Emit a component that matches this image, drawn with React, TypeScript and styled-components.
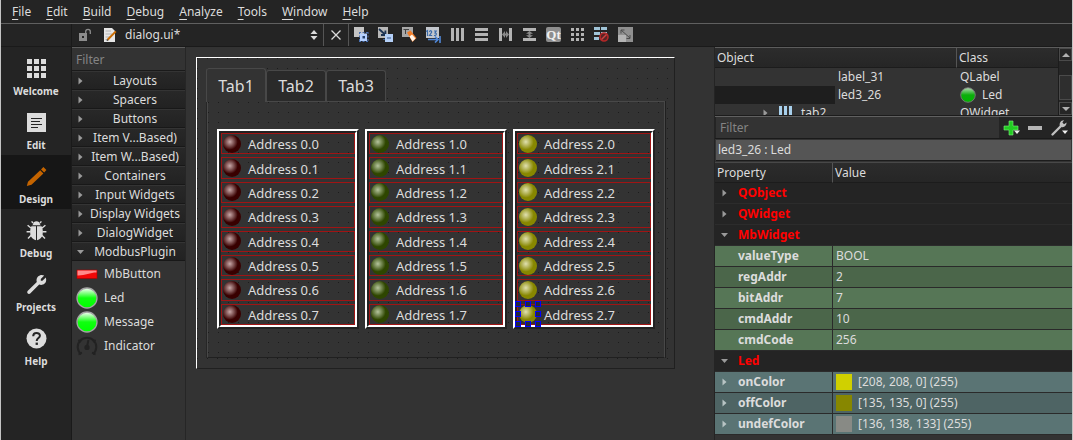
import React from "react";
import styled, { createGlobalStyle, css } from "styled-components";

const GlobalStyle = createGlobalStyle`
  *, *::before, *::after { box-sizing: border-box; }
  body {
    margin: 0;
    background: #333333;
    color: #dcdcdc;
    font: 12px/18px "Noto Sans", "Open Sans", sans-serif;
  }
  button, input, select {
    font: inherit;
    color: inherit;
    margin: 0;
    padding: 0;
    border: 0;
    border-radius: 0;
    background: none;
    outline: none;
  }
  svg { display: block; flex: none; }
`;

const dotGrid = css`
  background: #333333 radial-gradient(circle at 0 0, #1c1c1c 1px, transparent 1px) 0 0 / 10px 10px;
`;

const Window = styled.div`
  display: flex;
  flex-direction: column;
  min-height: 100vh;
  border-left: 1px solid #c4c4c4;
  border-right: 1px solid #c4c4c4;
`;

const MenuBar = styled.nav`
  display: flex;
  gap: 15px;
  height: 24px;
  padding: 3px 11px 0;
  background: #242424;
  border-bottom: 1px solid #606060;
`;

const MenuButton = styled.button`
  height: 18px;
  line-height: 18px;
  &::first-letter {
    text-decoration: underline;
    text-underline-offset: 3px;
  }
`;

const Toolbar = styled.header`
  display: flex;
  align-items: center;
  height: 23px;
  background: #242424;
  border-bottom: 1px solid #1a1a1a;
`;

const ToolbarStart = styled.div`
  width: 71px;
  align-self: stretch;
  border-right: 1px solid #1a1a1a;
`;

const FileArea = styled.div`
  display: flex;
  align-items: center;
  align-self: stretch;
  width: 252px;
  padding: 0 5px 0 6px;
  border-right: 1px solid #555555;
`;

const FileSelect = styled.select`
  appearance: none;
  flex: 1;
  height: 20px;
  margin-left: 8px;
  padding: 0;
`;

const IconButton = styled.button`
  display: flex;
  align-items: center;
  justify-content: center;
  width: 24px;
  height: 22px;
`;

const CloseArea = styled.div`
  display: flex;
  border-right: 1px solid #555555;
`;

const Body = styled.div`
  display: flex;
  flex: 1;
`;

const ModeBar = styled.nav`
  display: flex;
  flex-direction: column;
  width: 71px;
  background: #242424;
  border-right: 1px solid #1a1a1a;
`;

const ModeButton = styled.button<{ $active?: boolean }>`
  display: flex;
  flex-direction: column;
  align-items: center;
  height: 54px;
  padding-top: 11px;
  gap: 3px;
  font-size: 10px;
  font-weight: bold;
  line-height: 18px;
  background: ${(p) => (p.$active ? "#161616" : "transparent")};
`;

const Palette = styled.aside`
  display: flex;
  flex-direction: column;
  width: 114px;
  border-right: 1px solid #262626;
`;

const PaletteFilter = styled.input`
  width: 100%;
  height: 24px;
  padding: 1px 4px 0;
  border-top: 1px solid #5c5c5c;
  border-bottom: 1px solid #1a1a1a;
  background: #333333;
  &::placeholder { color: #848484; opacity: 1; }
`;

const GroupButton = styled.button`
  display: flex;
  align-items: center;
  width: 100%;
  height: 19px;
  padding: 0 0 0 5px;
  background: linear-gradient(#282828, #222222);
  border-top: 1px solid #343434;
  border-bottom: 1px solid #181818;
  white-space: nowrap;
`;

const GroupLabel = styled.span`
  flex: 1;
  padding-left: 1px;
  text-align: center;
  line-height: 17px;
`;

const PaletteItems = styled.ul`
  margin: 0;
  padding: 1px 4px 0;
  list-style: none;
`;

const PaletteItem = styled.li`
  display: flex;
  align-items: center;
  gap: 6px;
  height: 24px;
`;

const Canvas = styled.main`
  flex: 1;
  padding: 10px 0 0 10px;
  border-right: 1px solid #242424;
`;

const Form = styled.div`
  width: max-content;
  padding: 10px 9px;
  border: 1px solid;
  border-color: #ffffff #202020 #202020 #ffffff;
  ${dotGrid}
`;

const TabRow = styled.div`
  display: flex;
  align-items: flex-end;
  height: 33px;
`;

const TabButton = styled.button<{ $active?: boolean }>`
  position: relative;
  z-index: ${(p) => (p.$active ? 1 : 0)};
  width: 60px;
  height: ${(p) => (p.$active ? 34 : 31)}px;
  margin-bottom: ${(p) => (p.$active ? -1 : 0)}px;
  font-size: 16px;
  line-height: 24px;
  border: 1px solid #484848;
  border-bottom: 0;
  border-radius: 3px 3px 0 0;
  background: ${(p) => (p.$active ? "#333333" : "#2a2a2a")};
`;

const TabPane = styled.div`
  display: flex;
  gap: 6px;
  margin-left: 1px;
  padding: 27px 9px 28px;
  border: 1px solid;
  border-color: #484848 #484848 #202020 #484848;
  box-shadow: 1px 0 #202020, -1px 0 #262626;
  ${dotGrid}
`;

const Frame = styled.div`
  width: 142px;
  border: 2px solid;
  border-color: #ffffff #222222 #222222 #ffffff;
`;

const AddressList = styled.ul`
  display: flex;
  flex-direction: column;
  gap: 3px;
  min-height: 196px;
  margin: 0;
  padding: 0;
  list-style: none;
  border: 2px solid;
  border-color: #222222 #ffffff #ffffff #222222;
`;

const AddressRow = styled.li`
  display: flex;
  flex: 1;
  align-items: center;
  gap: 7px;
  padding-left: 1px;
  border: 1px solid #a01414;
`;

const AddressLabel = styled.span`
  padding-top: 1px;
  font-size: 13px;
  line-height: 18px;
`;

const LedBall = styled.span<{ $color: string; $shine: string }>`
  position: relative;
  width: 18px;
  height: 18px;
  border-radius: 50%;
  background: radial-gradient(circle at 38% 38%, ${(p) => p.$shine} 0, ${(p) => p.$color} 50%);
`;

const Handles = styled.span`
  position: absolute;
  inset: -4px;
  display: grid;
  grid-template-columns: repeat(3, 6px);
  grid-template-rows: repeat(3, 6px);
  justify-content: space-between;
  align-content: space-between;
`;

const Handle = styled.span<{ $hidden?: boolean }>`
  border: 1px solid #0000ff;
  background: #262640;
  visibility: ${(p) => (p.$hidden ? "hidden" : "visible")};
`;

const Inspector = styled.aside`
  width: 357px;
  display: flex;
  flex-direction: column;
`;

const ObjectArea = styled.div`
  display: flex;
  height: 69px;
  border-top: 1px solid #5c5c5c;
  border-bottom: 1px solid #1c1c1c;
`;

const TreeClip = styled.div`
  flex: 1;
  height: 67px;
  overflow: hidden;
`;

const Table = styled.table`
  width: 100%;
  table-layout: fixed;
  border-collapse: separate;
  border-spacing: 0;
`;

const HeadCell = styled.th<{ $last?: boolean }>`
  height: 20px;
  padding: 0 2px;
  font-weight: normal;
  text-align: left;
  line-height: 18px;
  background: linear-gradient(#2c2c2c, #262626);
  border-right: ${(p) => (p.$last ? "0" : "1px solid #555555")};
  border-bottom: 1px solid #1c1c1c;
`;

const TreeCell = styled.td<{ $indent?: number; $dark?: boolean }>`
  height: 18px;
  padding: 0 0 0 ${(p) => p.$indent ?? 3}px;
  line-height: 18px;
  ${(p) => p.$dark && "background: linear-gradient(90deg, #1e1e1e 120px, transparent 120px);"}
`;

const CellContent = styled.span<{ $gap?: number }>`
  display: flex;
  align-items: center;
  gap: ${(p) => p.$gap ?? 6}px;
  height: 18px;
`;

const ScrollBar = styled.div`
  display: flex;
  flex-direction: column;
  width: 14px;
  border-left: 1px solid #1c1c1c;
  background: #262626;
`;

const ScrollButton = styled.button`
  display: flex;
  align-items: center;
  justify-content: center;
  height: 13px;
  border: 1px solid #4a4a4a;
`;

const ScrollTrack = styled.div`
  flex: 1;
  padding: 14px 0 2px;
  display: flex;
`;

const ScrollThumb = styled.div`
  flex: 1;
  border: 1px solid #4a4a4a;
  background: #2e2e2e;
`;

const FilterBar = styled.div`
  display: flex;
  align-items: center;
  height: 23px;
  border-top: 1px solid #606060;
  border-bottom: 1px solid #1a1a1a;
  background: #242424;
`;

const PropertyFilter = styled.input`
  flex: 1;
  min-width: 0;
  height: 21px;
  padding: 0 3px 0 4px;
  margin-left: 1px;
  background: #333333;
  &::placeholder { color: #848484; opacity: 1; }
`;

const FilterTools = styled.div`
  display: flex;
  width: 73px;
`;

const ObjectName = styled.div`
  height: 21px;
  margin: 1px 1px 0;
  padding: 1px 2px;
  background: #555555;
  border-bottom: 1px solid #1c1c1c;
`;

const PropertyTable = styled(Table)`
  margin-top: 1px;
  border-top: 1px solid #484848;
`;

const GroupCell = styled.th`
  height: 21px;
  padding: 0 0 0 6px;
  background: #242424;
  border-bottom: 1px solid #2c2c2c;
  text-align: left;
  color: #ff0000;
`;

const NameCell = styled.th<{ $bg: string; $nested?: boolean }>`
  height: 21px;
  padding: 0 0 0 ${(p) => (p.$nested ? 6 : 23)}px;
  text-align: left;
  background: ${(p) => p.$bg};
  border-bottom: 1px solid #2a2a2a;
  border-right: 1px solid #2a2a2a;
`;

const ValueCell = styled.td<{ $bg: string }>`
  height: 21px;
  padding: 0 0 0 3px;
  background: ${(p) => p.$bg};
  border-bottom: 1px solid #2a2a2a;
`;

const Swatch = styled.span<{ $color: string }>`
  width: 16px;
  height: 16px;
  background: ${(p) => p.$color};
`;

function Arrow({ open, color = "#9a9a9a" }: { open?: boolean; color?: string }) {
  return (
    <svg width="7" height="8" viewBox="0 0 7 8" fill={color}>
      <path d={open ? "M0 2H7L3.5 6Z" : "M1.5 0.5V7.5L5.5 4Z"} />
    </svg>
  );
}

function GreenBall({ size, dim }: { size: number; dim?: boolean }) {
  const id = dim ? "ballDim" : "ballLit";
  return (
    <svg width={size} height={size} viewBox="0 0 22 22">
      <defs>
        <linearGradient id={id} x1="0" y1="0" x2="0" y2="1">
          <stop offset="0" stopColor={dim ? "#b8d8b8" : "#ffffff"} />
          <stop offset="0.5" stopColor={dim ? "#0cae0c" : "#10ff10"} />
          <stop offset="1" stopColor={dim ? "#00b400" : "#00ff00"} />
        </linearGradient>
      </defs>
      <circle cx="11" cy="11" r="10" fill={`url(#${id})`} stroke={dim ? "#777777" : "#a4a4a4"} strokeWidth="1.3" />
    </svg>
  );
}

const RedButtonIcon = () => (
  <svg width="22" height="22" viewBox="0 0 22 22">
    <rect x="1" y="7" width="20" height="8.5" fill="#f00808" stroke="#a80000" strokeWidth="0.6" />
    <path d="M1.5 7.4H20.5V9.5C14 9.5 9 12.6 1.5 12.4Z" fill="#ff8a8a" />
  </svg>
);

const GaugeIcon = () => (
  <svg width="22" height="22" viewBox="0 0 22 22" fill="none" stroke="#222222">
    <path d="M5.2 19.2A9.3 9.3 0 1 1 16.8 19.2" strokeWidth="2" />
    <path d="M2.500 19.500L6 17.5M19.500 19.500L16 17.5M2.4 5L5 7M19.6 5L17 7" strokeWidth="1.6" />
    <path d="M11 12L12.4 5" strokeWidth="2" />
    <circle cx="11" cy="12.4" r="2.6" fill="#222222" stroke="none" />
  </svg>
);

const modeIcons: Record<string, React.ReactNode> = {
  Welcome: <path d="M1 1h5v5h-5zM8 1h5v5h-5zM15 1h5v5h-5zM1 8h5v5h-5zM8 8h5v5h-5zM15 8h5v5h-5zM1 15h5v5h-5zM8 15h5v5h-5zM15 15h5v5h-5z" />,
  Edit: (
    <>
      <path d="M1 1h19v19h-19z" />
      <path d="M5 6.5H16M5 9.5H14M5 12.5H16M5 15.5H12" stroke="#242424" />
    </>
  ),
  Design: <path d="M14.2 4.2L17.4 7.4L5.5 18.8L0.8 20L2 15.8ZM15 3.4L17.4 1L20.4 4L18.2 6.4Z" fill="#c46400" />,
  Debug: (
    <>
      <path d="M7 4.4C7 0.2 14 0.2 14 4.4L15 5.3H6Z" />
      <path d="M10 6.2H5.4C4 8.5 4 12 4.4 14.4C5 17.6 7.2 19.6 10 20.2ZM11 6.2H15.6C17 8.5 17 12 16.6 14.4C16 17.6 13.8 19.6 11 20.2Z" />
      <path d="M1.6 5.2L5 8M0.6 11.8H4.6M2 18.6L5.4 15M19.4 5.2L16 8M20.4 11.8H16.4M19 18.6L15.6 15M7 3L5.6 1.4M14 3L15.4 1.4" stroke="#dcdcdc" strokeWidth="1.4" />
    </>
  ),
  Projects: <path d="M18.2 1.6L14.8 5V6.8H16.4L19.8 3.4C20.6 6 20.2 8 18.6 9.5C17 11 15 11.2 13.2 10.6L4.2 19.6C2.6 21 0.2 18.8 1.6 17L10.8 8C10.2 6 10.6 4 12 2.6C13.8 0.9 16 0.6 18.2 1.6Z" />,
  Help: (
    <>
      <circle cx="10.5" cy="10.5" r="10" />
      <path d="M7.2 8.2C7.2 3.8 13.9 4 13.9 7.8C13.9 10 10.7 10.3 10.7 13" fill="none" stroke="#242424" strokeWidth="2" />
      <path d="M9.6 14.6h2.3v2.3h-2.3z" fill="#242424" />
    </>
  ),
};

const LockIcon = () => (
  <svg width="14" height="14" viewBox="0 0 14 14">
    <rect x="1" y="5" width="8" height="8" fill="#8c8c8c" />
    <rect x="4" y="8" width="2" height="2" fill="#242424" />
    <path d="M7.7 5V3.5C7.7 0.6 12.3 0.6 12.3 3.5V6" fill="none" stroke="#8c8c8c" strokeWidth="1.3" />
  </svg>
);

const FormFileIcon = () => (
  <svg width="14" height="16" viewBox="0 0 14 16">
    <path d="M1 1H9L12 4V15H1Z" fill="#e6e6e6" />
    <path d="M2.5 4H8M2.5 7H9M2.5 10H7M2.5 12.5H6" stroke="#b4b4b4" />
    <path d="M12.8 4.4L4.6 12.8" stroke="#c86a00" strokeWidth="2" />
    <path d="M3.6 14L4 12L5.4 13.4Z" fill="#333333" />
  </svg>
);

const toolIcons: { label: string; art: React.ReactNode }[] = [
  {
    label: "Edit Widgets",
    art: (
      <>
        <path d="M1 0H11V10H1Z" fill="#c4c4c4" />
        <path d="M6 5.500H15.500M6 14.500H15.500M6.500 5V15M15 5V15" stroke="#4a70b0" strokeDasharray="2 1.500" />
        <rect x="7" y="6.500" width="7" height="7.500" fill="#b4d0ff" />
        <path d="M9.500 9h2.500v2.500h-2.500z" fill="#24406c" />
      </>
    ),
  },
  {
    label: "Edit Signals/Slots",
    art: (
      <>
        <path d="M1 0H11V11H1Z" fill="#b8b8b8" />
        <path d="M2 2L8 7.500M8.400 3.500V8H4" stroke="#1c3454" strokeWidth="1.8" fill="none" />
        <path d="M8 7H16V15H8Z" fill="#b4d0f8" />
        <path d="M6 12.500H8M10 11H14" stroke="#38588c" />
      </>
    ),
  },
  {
    label: "Edit Buddies",
    art: (
      <>
        <path d="M1 0H12V10H1Z" fill="#a8a8a8" />
        <path d="M2.500 2.500H8M4.500 3V7" stroke="#444444" />
        <path d="M6 5.500L9.500 3.500L15.500 11L11.500 15Z" fill="#f07c28" />
        <path d="M8.500 9.500L11 7.500L14.500 11.500L11.500 14.500Z" fill="#fff4ea" />
      </>
    ),
  },
  {
    label: "Edit Tab Order",
    art: (
      <>
        <path d="M1 0H14V11H1Z" fill="#c4c8ce" />
        <path d="M1 4.500L2.500 3.500V9M4.500 5C5 3 7 3.500 6.600 5.300L4.500 8.500H7.200M9 4H11.200L10 6C12.200 6 11.600 9 9 8.400" stroke="#3c6caa" strokeWidth="1.2" fill="none" />
        <path d="M3 12.500H12M10 9.500L13 12.500L10 15.500M15 9V16" stroke="#5088d8" strokeWidth="1.6" fill="none" />
      </>
    ),
  },
  { label: "Lay Out Horizontally", art: <path d="M2 1h3v13h-3zM7 1h3v13h-3zM12 1h3v13h-3z" fill="#b4b4b4" /> },
  { label: "Lay Out Vertically", art: <path d="M2 1h13v3h-13zM2 6h13v3h-13zM2 11h13v3h-13z" fill="#b4b4b4" /> },
  {
    label: "Lay Out Horizontally in Splitter",
    art: (
      <>
        <path d="M2 1h3v13h-3zM12 1h3v13h-3z" fill="#b4b4b4" />
        <path d="M5 7.500L8 4V6.500H9V4L12 7.500L9 11V8.500H8V11Z" fill="#8a8a8a" />
      </>
    ),
  },
  {
    label: "Lay Out Vertically in Splitter",
    art: (
      <>
        <path d="M2 1h13v3h-13zM2 11h13v3h-13z" fill="#b4b4b4" />
        <path d="M8.500 4L12 6.800H9.500V8.200H12L8.500 11L5 8.200H7.500V6.800H5Z" fill="#8a8a8a" />
      </>
    ),
  },
  {
    label: "Lay Out in a Form Layout",
    art: (
      <>
        <rect x="1" y="0" width="15" height="15" rx="2" fill="#8e8e8e" />
        <text x="8.500" y="12" textAnchor="middle" fontFamily="Liberation Serif, serif" fontSize="13" fontWeight="bold" fill="#f0f0f0">Qt</text>
      </>
    ),
  },
  { label: "Lay Out in a Grid", art: <path d="M2 1h3v3h-3zM7 1h3v3h-3zM12 1h3v3h-3zM2 6h3v3h-3zM7 6h3v3h-3zM12 6h3v3h-3zM2 11h3v3h-3zM7 11h3v3h-3zM12 11h3v3h-3z" fill="#b4b4b4" /> },
  {
    label: "Break Layout",
    art: (
      <>
        <path d="M1 0h6v3h-6zM8 0h6v3h-6zM1 5h6v3h-6zM8 5h6v3h-6zM1 10h5v3h-5z" fill="#a0c4d8" />
        <circle cx="11" cy="10" r="4" fill="#5a2424" stroke="#b42828" strokeWidth="1.6" />
        <path d="M8.500 12.500L13.500 7.500" stroke="#d04040" strokeWidth="1.5" />
      </>
    ),
  },
  {
    label: "Adjust Size",
    art: (
      <>
        <path d="M1 0h15v15h-15z" fill="#909090" />
        <path d="M1 8h8v7h-8z" fill="#b4b4b4" />
        <path d="M4 3L13 11M4 6.500V3H7.500M13 8V11.500H9.500" stroke="#4c4c4c" fill="none" />
      </>
    ),
  },
];

const menus = ["File", "Edit", "Build", "Debug", "Analyze", "Tools", "Window", "Help"];
const groups = [
  "Layouts",
  "Spacers",
  "Buttons",
  "Item V...Based)",
  "Item W...Based)",
  "Containers",
  "Input Widgets",
  "Display Widgets",
  "DialogWidget",
  "ModbusPlugin",
];
const columns = [
  { color: "#380000", shine: "#c8a8a8" },
  { color: "#2e4600", shine: "#b4c49c" },
  { color: "#878700", shine: "#e0e0b0" },
];
const addresses = [0, 1, 2, 3, 4, 5, 6, 7];
const mbProperties = [
  ["valueType", "BOOL"],
  ["regAddr", "2"],
  ["bitAddr", "7"],
  ["cmdAddr", "10"],
  ["cmdCode", "256"],
];
const ledProperties = [
  ["onColor", "[208, 208, 0] (255)", "#d0d000"],
  ["offColor", "[135, 135, 0] (255)", "#878700"],
  ["undefColor", "[136, 138, 133] (255)", "#888a85"],
];

function PropertyGroup({ name, open }: { name: string; open?: boolean }) {
  return (
    <tr>
      <GroupCell colSpan={2}>
        <CellContent $gap={10}>
          <Arrow open={open} />
          {name}
        </CellContent>
      </GroupCell>
    </tr>
  );
}

export default function App() {
  return (
    <Window>
      <GlobalStyle />
      <MenuBar>
        {menus.map((m) => (
          <MenuButton key={m}>{m}</MenuButton>
        ))}
      </MenuBar>
      <Toolbar>
        <ToolbarStart />
        <FileArea>
          <LockIcon />
          <svg width="11" height="1" />
          <FormFileIcon />
          <FileSelect aria-label="Open file" defaultValue="dialog.ui*">
            <option>dialog.ui*</option>
          </FileSelect>
          <svg width="8" height="12" viewBox="0 0 8 12" fill="#dcdcdc">
            <path d="M0.500 5H7.500L4 1ZM0.500 7H7.500L4 11Z" />
          </svg>
        </FileArea>
        <CloseArea>
          <IconButton aria-label="Close file">
            <svg width="10" height="10" viewBox="0 0 10 10" stroke="#dcdcdc" strokeWidth="1.300">
              <path d="M0.500 0.500L9.500 9.500M9.500 0.500L0.500 9.500" />
            </svg>
          </IconButton>
        </CloseArea>
        {toolIcons.map((t) => (
          <IconButton key={t.label} aria-label={t.label}>
            <svg width="16" height="16" viewBox="0 0 16 16">
              {t.art}
            </svg>
          </IconButton>
        ))}
      </Toolbar>
      <Body>
        <ModeBar>
          {Object.keys(modeIcons).map((m) => (
            <ModeButton key={m} $active={m === "Design"}>
              <svg width="21" height="21" viewBox="0 0 21 21" fill="#dcdcdc">
                {modeIcons[m]}
              </svg>
              {m}
            </ModeButton>
          ))}
        </ModeBar>
        <Palette>
          <PaletteFilter aria-label="Filter widgets" placeholder="Filter" />
          {groups.map((g) => (
            <GroupButton key={g}>
              <Arrow open={g === "ModbusPlugin"} />
              <GroupLabel>{g}</GroupLabel>
            </GroupButton>
          ))}
          <PaletteItems>
            <PaletteItem><RedButtonIcon />MbButton</PaletteItem>
            <PaletteItem><GreenBall size={22} />Led</PaletteItem>
            <PaletteItem><GreenBall size={22} />Message</PaletteItem>
            <PaletteItem><GaugeIcon />Indicator</PaletteItem>
          </PaletteItems>
        </Palette>
        <Canvas>
          <Form>
            <TabRow role="tablist">
              <TabButton role="tab" $active>Tab1</TabButton>
              <TabButton role="tab">Tab2</TabButton>
              <TabButton role="tab">Tab3</TabButton>
            </TabRow>
            <TabPane>
              {columns.map((c, col) => (
                <Frame key={col}>
                  <AddressList>
                    {addresses.map((n) => (
                      <AddressRow key={n}>
                        <LedBall $color={c.color} $shine={c.shine}>
                          {col === 2 && n === 7 && (
                            <Handles>
                              {[0, 1, 2, 3, 4, 5, 6, 7, 8].map((h) => (
                                <Handle key={h} $hidden={h === 4} />
                              ))}
                            </Handles>
                          )}
                        </LedBall>
                        <AddressLabel>{`Address ${col}.${n}`}</AddressLabel>
                      </AddressRow>
                    ))}
                  </AddressList>
                </Frame>
              ))}
            </TabPane>
          </Form>
        </Canvas>
        <Inspector>
          <ObjectArea>
            <TreeClip>
              <Table>
                <colgroup>
                  <col />
                  <col width="101" />
                </colgroup>
                <thead>
                  <tr>
                    <HeadCell>Object</HeadCell>
                    <HeadCell $last>Class</HeadCell>
                  </tr>
                </thead>
                <tbody>
                  <tr>
                    <TreeCell $indent={123}>label_31</TreeCell>
                    <TreeCell>QLabel</TreeCell>
                  </tr>
                  <tr>
                    <TreeCell $indent={123} $dark>led3_26</TreeCell>
                    <TreeCell>
                      <CellContent><GreenBall size={16} dim />Led</CellContent>
                    </TreeCell>
                  </tr>
                  <tr>
                    <TreeCell $indent={47}>
                      <CellContent $gap={5}>
                        <Arrow />
                        <svg width="22" height="14" viewBox="0 0 22 14">
                          <path d="M5 0h3v14h-3zM10 0h3v14h-3zM15 0h3v14h-3z" fill="#a8d0ec" />
                        </svg>
                        tab2
                      </CellContent>
                    </TreeCell>
                    <TreeCell>QWidget</TreeCell>
                  </tr>
                </tbody>
              </Table>
            </TreeClip>
            <ScrollBar>
              <ScrollButton aria-label="Scroll up">
                <svg width="8" height="4" viewBox="0 0 8 4" fill="#b0b0b0"><path d="M0 4H8L4 0Z" /></svg>
              </ScrollButton>
              <ScrollTrack><ScrollThumb /></ScrollTrack>
              <ScrollButton aria-label="Scroll down">
                <svg width="8" height="4" viewBox="0 0 8 4" fill="#b0b0b0"><path d="M0 0H8L4 4Z" /></svg>
              </ScrollButton>
            </ScrollBar>
          </ObjectArea>
          <FilterBar>
            <PropertyFilter aria-label="Filter properties" placeholder="Filter" />
            <FilterTools>
              <IconButton aria-label="Add property">
                <svg width="18" height="18" viewBox="0 0 18 18">
                  <path d="M7 2h4v5h5v4h-5v5h-4v-5h-5v-4h5z" fill="#22cc22" stroke="#7cf07c" strokeWidth="0.600" />
                  <path d="M12 11.500H18L15 15Z" fill="#f0f0f0" />
                </svg>
              </IconButton>
              <IconButton aria-label="Remove property">
                <svg width="16" height="16" viewBox="0 0 16 16"><path d="M1 6h14v4h-14z" fill="#b4b4b4" /></svg>
              </IconButton>
              <IconButton aria-label="Configure">
                <svg width="18" height="18" viewBox="0 0 18 18">
                  <path d="M2.500 15.500L10.500 7.500" stroke="#c0c0c0" strokeWidth="2.400" strokeLinecap="round" />
                  <path d="M10 7.500C8.800 4 11 1 14 1.200L12.400 3.600L14 5.200L16.600 3.600C16.600 7 13.600 9.400 10 7.500Z" fill="#c0c0c0" />
                  <path d="M12 11.500H18L15 15Z" fill="#f0f0f0" />
                </svg>
              </IconButton>
            </FilterTools>
          </FilterBar>
          <ObjectName>led3_26 : Led</ObjectName>
          <PropertyTable>
            <colgroup>
              <col width="118" />
              <col />
            </colgroup>
            <thead>
              <tr>
                <HeadCell>Property</HeadCell>
                <HeadCell $last>Value</HeadCell>
              </tr>
            </thead>
            <tbody>
              <PropertyGroup name="QObject" />
              <PropertyGroup name="QWidget" />
              <PropertyGroup name="MbWidget" open />
              {mbProperties.map(([name, value], i) => {
                const bg = i % 2 ? "#4b664a" : "#567656";
                return (
                  <tr key={name}>
                    <NameCell $bg={bg}>{name}</NameCell>
                    <ValueCell $bg={bg}>{value}</ValueCell>
                  </tr>
                );
              })}
              <PropertyGroup name="Led" open />
              {ledProperties.map(([name, value, color], i) => {
                const bg = i % 2 ? "#4e6464" : "#5a7474";
                return (
                  <tr key={name}>
                    <NameCell $bg={bg} $nested>
                      <CellContent $gap={10}><Arrow color="#b8c4c4" />{name}</CellContent>
                    </NameCell>
                    <ValueCell $bg={bg}>
                      <CellContent><Swatch $color={color} />{value}</CellContent>
                    </ValueCell>
                  </tr>
                );
              })}
            </tbody>
          </PropertyTable>
        </Inspector>
      </Body>
    </Window>
  );
}
